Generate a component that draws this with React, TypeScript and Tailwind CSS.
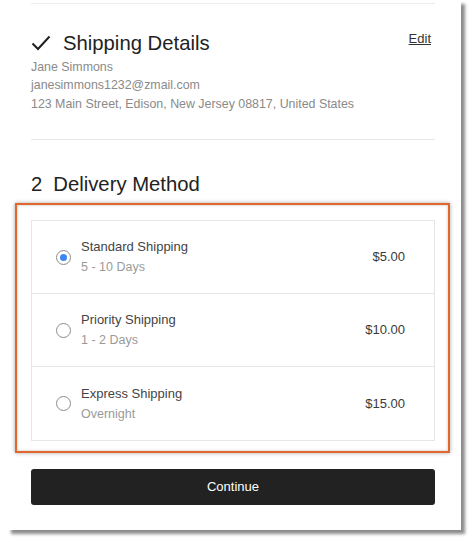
import React from "react";

const font = { fontFamily: '"Liberation Sans", Arial, sans-serif' };

function Radio({ checked }: { checked?: boolean }) {
  return (
    <span className="flex h-[15px] w-[15px] shrink-0 items-center justify-center rounded-full border border-[#8c8c8c] bg-white">
      {checked && <span className="h-[7px] w-[7px] rounded-full bg-[#3d86f0]" />}
    </span>
  );
}

function Option({
  title,
  sub,
  price,
  checked,
  last,
}: {
  title: string;
  sub: string;
  price: string;
  checked?: boolean;
  last?: boolean;
}) {
  return (
    <div
      className={`flex h-[73px] items-center pl-[24px] pr-[29px] ${last ? "" : "border-b border-[#e6e6e6]"}`}
    >
      <Radio checked={checked} />
      <div className="ml-[10px] flex flex-col">
        <span className="text-[13px] leading-[20px] text-[#444]">{title}</span>
        <span className="text-[12.5px] leading-[20px] text-[#9a9a9a]">{sub}</span>
      </div>
      <span className="ml-auto text-[13px] text-[#3a3a3a]">{price}</span>
    </div>
  );
}

export default function App() {
  return (
    <div className="h-[541px] w-[474px] overflow-hidden bg-white" style={font}>
      <div className="ml-[7px] flex h-[530px] w-[454px] flex-col bg-white pl-[24px] pr-[26px] shadow-[4px_4px_3px_rgba(0,0,0,0.45)]">
        <div className="mt-[3px] h-px bg-[#ececec]" />

        <div className="mt-[26px] flex h-[26px] items-center">
          <svg width="20" height="16" viewBox="0 0 20 16" className="mr-[12px]">
            <path d="M1.5 8.5 L7 14 L18.5 1.5" fill="none" stroke="#1f1f1f" strokeWidth="2" />
          </svg>
          <span className="text-[20.3px] leading-[26px] text-[#222]">Shipping Details</span>
          <a className="ml-auto -mt-[9px] mr-[4px] text-[13px] text-[#333] underline">Edit</a>
        </div>

        <div className="mt-[1.5px] flex flex-col text-[12.4px] leading-[18.5px] text-[#8a8a8a]">
          <span>Jane Simmons</span>
          <span>janesimmons1232@zmail.com</span>
          <span>123 Main Street, Edison, New Jersey 08817, United States</span>
        </div>

        <div className="mt-[26px] h-px bg-[#e6e6e6]" />

        <div className="mt-[31px] flex h-[26px] items-center text-[20.3px] leading-[26px] text-[#222]">
          <span>2</span>
          <span className="ml-[11px]">Delivery Method</span>
        </div>

        <div className="-ml-[16px] -mr-[15px] mt-[6px] border-2 border-[#e0682c] pb-[10px] pl-[14px] pr-[13px] pt-[15px] shadow-[0_0_4px_rgba(0,0,0,0.35),inset_0_0_3px_rgba(0,0,0,0.25)]">
          <div className="border border-[#e6e6e6]">
            <Option title="Standard Shipping" sub="5 - 10 Days" price="$5.00" checked />
            <Option title="Priority Shipping" sub="1 - 2 Days" price="$10.00" />
            <Option title="Express Shipping" sub="Overnight" price="$15.00" last />
          </div>
        </div>

        <button className="mt-[16px] flex h-[36px] w-full items-center justify-center rounded-[3px] bg-[#222] text-[13px] text-white">
          Continue
        </button>
      </div>
    </div>
  );
}
